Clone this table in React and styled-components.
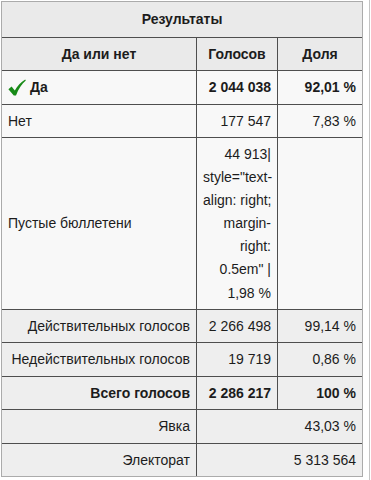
import React from "react";
import styled, { createGlobalStyle } from "styled-components";

const GlobalStyle = createGlobalStyle`
  body {
    margin: 0;
    background: #ffffff;
    font-family: "Liberation Sans", Arial, sans-serif;
  }
`;

const Frame = styled.div`
  box-sizing: border-box;
  width: 370px;
  height: 480px;
  padding: 1px 0 0 1px;
  border-right: 1px solid #c4c4c4;
  background: #ffffff;
`;

const Table = styled.table`
  width: 362px;
  table-layout: fixed;
  border-collapse: separate;
  border-spacing: 0;
  border: 1px solid #ababab;
  font-size: 14px;
  line-height: 23.5px;
  color: #1c1c1c;

  tr:last-child > * {
    border-bottom: none;
  }
`;

const Cell = styled.td`
  padding: 5px 6px 4px;
  border-right: 1px solid #4e4e4e;
  border-bottom: 1px solid #4e4e4e;
  text-align: ${(p) => p.$align || "left"};
  font-weight: ${(p) => (p.$bold ? "bold" : "normal")};
  background: ${(p) => p.$bg || "#f8f8f8"};
  vertical-align: middle;
  white-space: nowrap;

  &:last-child {
    border-right: none;
  }
`;

const HeadCell = styled(Cell).attrs({ as: "th" })`
  background: #eaeaea;
  text-align: center;
  font-weight: bold;
  padding: ${(p) => (p.$title ? "6px 6px 5px" : "5px 6px 4px")};
`;

const Yes = styled.span`
  display: inline-flex;
  align-items: center;
  gap: 4px;
  vertical-align: top;
`;

const Lines = styled.span`
  display: block;
  line-height: 23.1px;
`;

const Check = () => (
  <svg width="18" height="17" viewBox="0 0 18 17">
    <path
      d="M0.4 10.2 L3.6 7.6 L6.8 11.4 C9.4 6.8 12.8 3 17.2 0.4 L17.8 1.4 C14 4.8 10.4 9.6 8 16.4 L5.8 16.4 Z"
      fill="#178a17"
    />
  </svg>
);

const grey = "#eeeeee";

export default function App() {
  return (
    <>
      <GlobalStyle />
      <Frame>
        <Table>
          <colgroup>
            <col style={{ width: 195 }} />
            <col style={{ width: 81 }} />
            <col style={{ width: 84 }} />
          </colgroup>
          <tbody>
            <tr>
              <HeadCell $title colSpan={3}>Результаты</HeadCell>
            </tr>
            <tr>
              <HeadCell>Да или нет</HeadCell>
              <HeadCell>Голосов</HeadCell>
              <HeadCell>Доля</HeadCell>
            </tr>
            <tr>
              <Cell $bold>
                <Yes>
                  <Check />
                  Да
                </Yes>
              </Cell>
              <Cell $bold $align="right">2{"\u00a0"}044{"\u00a0"}038</Cell>
              <Cell $bold $align="right">92,01{"\u00a0"}%</Cell>
            </tr>
            <tr>
              <Cell>Нет</Cell>
              <Cell $align="right">177{"\u00a0"}547</Cell>
              <Cell $align="right">7,83{"\u00a0"}%</Cell>
            </tr>
            <tr>
              <Cell>Пустые бюллетени</Cell>
              <Cell $align="right">
                <Lines>
                  44{"\u00a0"}913|
                  <br />
                  style="text-
                  <br />
                  align: right;
                  <br />
                  margin-
                  <br />
                  right:
                  <br />
                  0.5em" |
                  <br />
                  1,98{"\u00a0"}%
                </Lines>
              </Cell>
              <Cell $align="right"></Cell>
            </tr>
            <tr>
              <Cell $bg={grey} $align="right">Действительных голосов</Cell>
              <Cell $bg={grey} $align="right">2{"\u00a0"}266{"\u00a0"}498</Cell>
              <Cell $bg={grey} $align="right">99,14{"\u00a0"}%</Cell>
            </tr>
            <tr>
              <Cell $bg={grey} $align="right">Недействительных голосов</Cell>
              <Cell $bg={grey} $align="right">19{"\u00a0"}719</Cell>
              <Cell $bg={grey} $align="right">0,86{"\u00a0"}%</Cell>
            </tr>
            <tr>
              <Cell $bg={grey} $bold $align="right">Всего голосов</Cell>
              <Cell $bg={grey} $bold $align="right">2{"\u00a0"}286{"\u00a0"}217</Cell>
              <Cell $bg={grey} $bold $align="right">100{"\u00a0"}%</Cell>
            </tr>
            <tr>
              <Cell $bg={grey} $align="right">Явка</Cell>
              <Cell $bg={grey} $align="right" colSpan={2}>43,03{"\u00a0"}%</Cell>
            </tr>
            <tr>
              <Cell $bg={grey} $align="right">Электорат</Cell>
              <Cell $bg={grey} $align="right" colSpan={2}>5{"\u00a0"}313{"\u00a0"}564</Cell>
            </tr>
          </tbody>
        </Table>
      </Frame>
    </>
  );
}
